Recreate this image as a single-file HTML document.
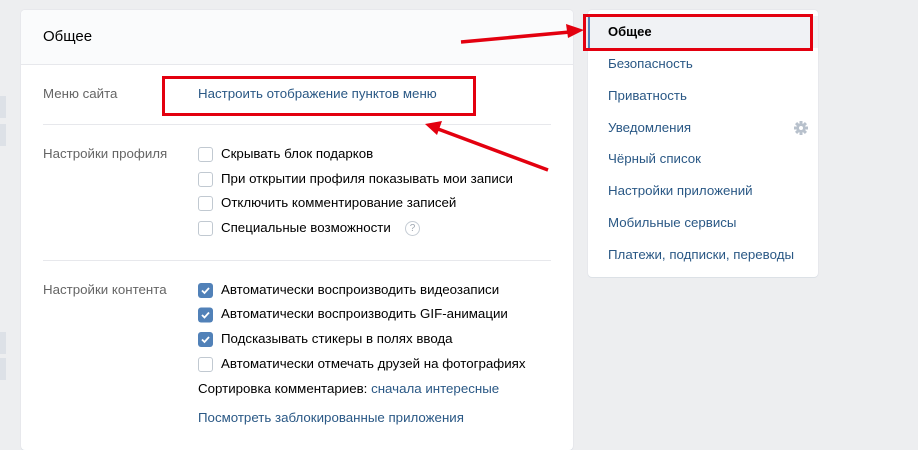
<!DOCTYPE html>
<html><head><meta charset="utf-8"><style>
body{margin:0;width:918px;height:430px;background:#edeef0;font-family:"Liberation Sans",sans-serif;font-size:13.3px;position:relative;overflow:hidden}
.a{position:absolute}
.card{left:21px;top:10px;width:552px;height:440px;background:#fff;border-radius:4px;box-shadow:0 1px 0 #dce1e6,0 0 0 1px #e7e8ec}
.hdr{left:21px;top:10px;width:552px;height:54px;background:#fafbfc;border-bottom:1px solid #e7e8ec;border-radius:4px 4px 0 0}
.lbl{color:#656565}
.t{color:#000}
.lnk{color:#2a5885}
.cb{width:13px;height:13px;border:1px solid #c1c9d1;border-radius:3px;background:#fff}
.sep{height:1px;background:#e7e8ec;left:43px;width:508px}
.menu{left:588px;top:10px;width:230px;height:267px;background:#fff;border-radius:4px;box-shadow:0 1px 0 #dce1e6,0 0 0 1px #e7e8ec}
.mi{left:608px;color:#2a5885}
.stub{left:0;width:6px;height:22px;background:#dde1e7}
</style></head><body>
<div class="a stub" style="top:96px"></div><div class="a stub" style="top:124px"></div>
<div class="a stub" style="top:332px"></div><div class="a stub" style="top:358px"></div>
<div class="a card"></div>
<div class="a hdr"></div>
<div class="a t" style="left:43px;top:28px;font-size:15px">Общее</div>
<div class="a lbl" style="left:43px;top:86px">Меню сайта</div>
<div class="a lnk" style="left:198px;top:86px">Настроить отображение пунктов меню</div>
<div class="a" style="left:162px;top:76px;width:308px;height:34px;border:3px solid #e3000f"></div>
<div class="a sep" style="top:124px"></div>
<div class="a lbl" style="left:43px;top:146px">Настройки профиля</div>
<div class="a cb" style="left:198px;top:147px"></div><div class="a t" style="left:221px;top:146px">Скрывать блок подарков</div>
<div class="a cb" style="left:198px;top:172px"></div><div class="a t" style="left:221px;top:171px">При открытии профиля показывать мои записи</div>
<div class="a cb" style="left:198px;top:196px"></div><div class="a t" style="left:221px;top:195px">Отключить комментирование записей</div>
<div class="a cb" style="left:198px;top:221px"></div><div class="a t" style="left:221px;top:220px">Специальные возможности</div>
<div class="a" style="left:405px;top:221px;width:13px;height:13px;border:1px solid #c5ccd4;border-radius:50%;color:#a0a8b2;font-size:10px;text-align:center;line-height:13px">?</div>
<div class="a sep" style="top:260px"></div>
<div class="a lbl" style="left:43px;top:282px">Настройки контента</div>
<svg class="a" style="left:198px;top:283px" width="15" height="80"><g fill="#5181b8"><rect width="15" height="15" rx="3"/><rect y="24.5" width="15" height="15" rx="3"/><rect y="49" width="15" height="15" rx="3"/></g><g stroke="#fff" stroke-width="1.8" fill="none"><path d="M4 7.5l2.5 2.5 4.5-5"/><path d="M4 32l2.5 2.5 4.5-5"/><path d="M4 56.5l2.5 2.5 4.5-5"/></g></svg>
<div class="a t" style="left:221px;top:282px">Автоматически воспроизводить видеозаписи</div>
<div class="a t" style="left:221px;top:306px">Автоматически воспроизводить GIF-анимации</div>
<div class="a t" style="left:221px;top:331px">Подсказывать стикеры в полях ввода</div>
<div class="a cb" style="left:198px;top:357px"></div><div class="a t" style="left:221px;top:356px">Автоматически отмечать друзей на фотографиях</div>
<div class="a t" style="left:198px;top:381px">Сортировка комментариев: <span class="lnk">сначала интересные</span></div>
<div class="a lnk" style="left:198px;top:410px">Посмотреть заблокированные приложения</div>
<div class="a menu"></div>
<div class="a" style="left:588px;top:16px;width:230px;height:32px;background:#f0f2f5;border-left:2px solid #5181b8;box-sizing:border-box"></div>
<div class="a" style="left:608px;top:24px;color:#000;font-weight:bold;font-size:13px">Общее</div>
<div class="a mi" style="top:56px">Безопасность</div>
<div class="a mi" style="top:88px">Приватность</div>
<div class="a mi" style="top:120px">Уведомления</div>
<svg class="a" style="left:794px;top:121px" width="14" height="14" viewBox="-7 -7 14 14"><g fill="#b8c1cc"><circle r="4.6"/><g id="tt"><rect x="-1.5" y="-7" width="3" height="14"/></g><use href="#tt" transform="rotate(45)"/><use href="#tt" transform="rotate(90)"/><use href="#tt" transform="rotate(135)"/></g><circle r="2" fill="#fff"/></svg>
<div class="a mi" style="top:151px">Чёрный список</div>
<div class="a mi" style="top:183px">Настройки приложений</div>
<div class="a mi" style="top:215px">Мобильные сервисы</div>
<div class="a mi" style="top:247px">Платежи, подписки, переводы</div>
<div class="a" style="left:583px;top:14px;width:224px;height:31px;border:3px solid #e3000f"></div>
<svg class="a" style="left:0;top:0" width="918" height="430"><g stroke="#e3000f" stroke-width="3.5" fill="#e3000f"><line x1="461" y1="42" x2="570" y2="32"/><line x1="548" y1="170" x2="438" y2="129"/></g><polygon fill="#e3000f" points="584,30 566,24 568,38"/><polygon fill="#e3000f" points="425,124 442,121 437,135"/></svg>
</body></html>
